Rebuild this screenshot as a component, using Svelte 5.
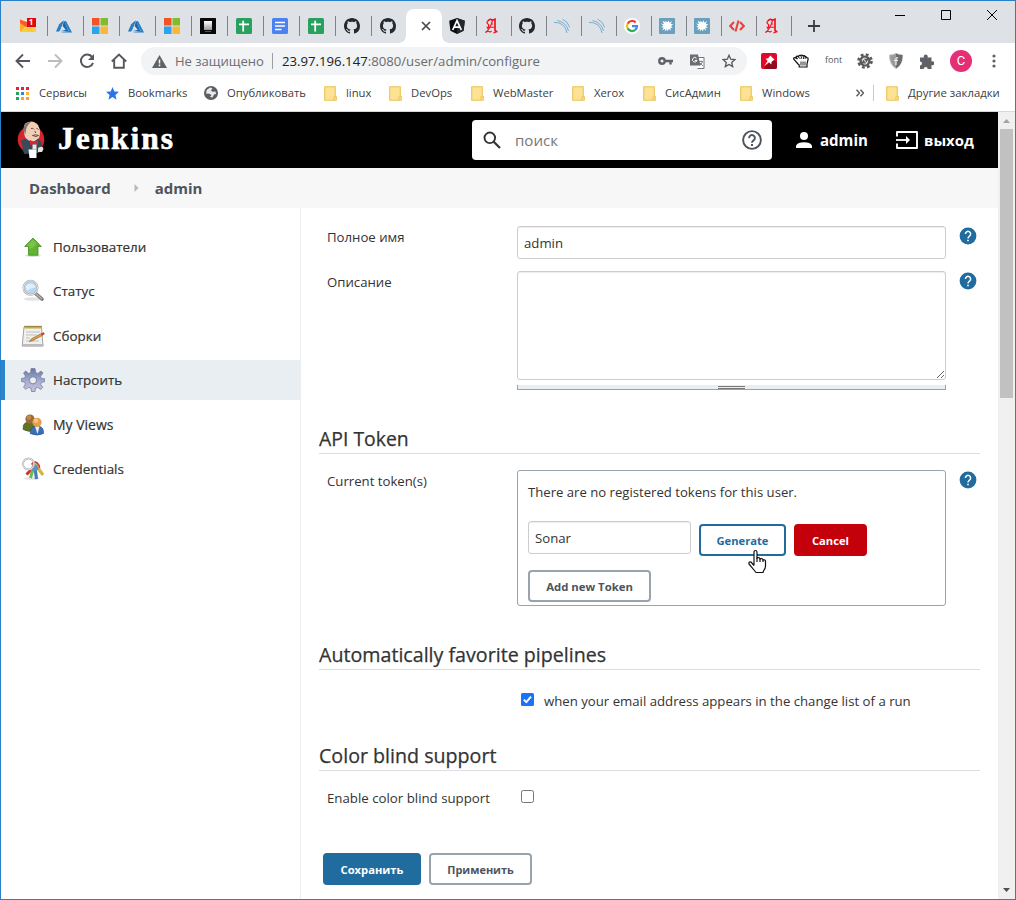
<script>
  const tabsBefore = ['mail', 'azure', 'ms', 'azure', 'ms', 'black', 'sheets', 'docs', 'sheets', 'github', 'github'];
  const tabsAfter = ['angular', 'gothic', 'github', 'swoosh', 'swoosh', 'google', 'splat', 'splat', 'code', 'gothic'];
  const folders = [
    { name: 'linux', width: 65 },
    { name: 'DevOps', width: 82 },
    { name: 'WebMaster', width: 101 },
    { name: 'Xerox', width: 71 },
    { name: 'СисАдмин', width: 97 },
    { name: 'Windows', width: 112 }
  ];
  const menu = [
    { label: 'Пользователи', icon: 'up' },
    { label: 'Статус', icon: 'search' },
    { label: 'Сборки', icon: 'notepad' },
    { label: 'Настроить', icon: 'gear', active: true },
    { label: 'My Views', icon: 'people' },
    { label: 'Credentials', icon: 'keys' }
  ];
  const gridDots = ['#ea1f3d', '#ea1f3d', '#ea1f3d', '#1fa463', '#2f83f7', '#f7b52c', '#1fa463', '#f7a52c', '#f7a52c'];
  let fullName = $state('admin');
  let tokenName = $state('Sonar');
  let description = $state('');
</script>

{#snippet favicon(kind)}
  {#if kind === 'mail'}
    <div class="mail">
      <svg width="16" height="16" viewBox="0 0 16 16">
        <path d="M0 3h16v11H0z" fill="#ffd24d" /><path d="M0 3v11l6-6z" fill="#f5ae2c" /><path d="M0 14l6-5 2 1.500L10 9l6 5z" fill="#ffca3a" /><path d="M0 2h8v7z" fill="#fff1c2" /><path d="M0 1.500V5l6 4 4-1V5z" fill="#fb5a2c" /><path d="M7 0h9v9H7z" fill="#e30613" />
      </svg>
      <b>1</b>
    </div>
  {:else}
    <svg width="16" height="16" viewBox="0 0 16 16">
      {#if kind === 'gothic'}
        <g fill="none" stroke="#f3121d"><path d="M4 2.800Q6 .5 8.500 2.200L11 1.200V12q.3 1.800 2.500 1.500" stroke-width="1.700" /><path d="M4.500 2.500Q1.500 4.500 4.500 6.500 5.500 8 3.500 11" stroke-width="1.300" /><path d="M8.500 2.500L6.500 8.500 3 13.500M2.500 9.300H11M7 5.500l2 .800" stroke-width="1.100" /><path d="M1.500 14.800q1-2.300 3-1.300 2 1 3-.5M9.500 14.800l2.500-1" stroke-width="1.300" /></g>
      {:else if kind === 'azure'}
        <path d="M7.500 2.600L3.300 6.300 0 13.500h3.200z" fill="#1b75bb" /><path d="M8.200 3.200l4.600 9.900-8.200 1.300H16L10 3z" fill="#1f80cc" /><path d="M8 2.500L6.600 8l3.200 3.800-5.300 1.400h8z" fill="#1769ae" /><path d="M8 2.500l-4 10H1.500L4 6z" fill="#2b80c5" />
      {:else if kind === 'ms'}
        <path d="M0 0h7.500v7.500H0z" fill="#f35325" /><path d="M8.500 0H16v7.500H8.500z" fill="#81bc2f" /><path d="M0 8.500h7.500V16H0z" fill="#2ba4ec" /><path d="M8.500 8.500H16V16H8.500z" fill="#fdb62f" />
      {:else if kind === 'black'}
        <defs><linearGradient id="plate" x2="0" y2="1"><stop stop-color="#fff" /><stop offset="1" stop-color="#999" /></linearGradient></defs>
        <rect width="16" height="16" rx=".5" fill="#080808" /><rect x="4" y="3" width="8" height="9" fill="url(#plate)" /><path d="M5 13.500h6" stroke="#888" stroke-width=".6" />
      {:else if kind === 'sheets'}
        <rect width="16" height="16" rx="1.500" fill="#27a15d" /><path d="M7.200 2.800v10.700M3 6.300h10" stroke="#fff" stroke-width="1.800" />
      {:else if kind === 'docs'}
        <rect width="16" height="16" rx="1.500" fill="#4b82f0" /><path d="M3 4.400h10M3 8h10M3 11.600h6.500" stroke="#fff" stroke-width="1.500" />
      {:else if kind === 'github'}
        <path fill="#24292e" d="M8 0C3.58 0 0 3.58 0 8c0 3.54 2.29 6.53 5.47 7.59.4.07.55-.17.55-.38 0-.19-.01-.82-.01-1.49-2.01.37-2.53-.49-2.69-.94-.09-.23-.48-.94-.82-1.13-.28-.15-.68-.52-.01-.53.63-.01 1.08.58 1.23.82.72 1.21 1.87.87 2.33.66.07-.52.28-.87.51-1.07-1.78-.2-3.64-.89-3.64-3.95 0-.87.31-1.59.82-2.15-.08-.2-.36-1.02.08-2.12 0 0 .67-.21 2.2.82.64-.18 1.32-.27 2-.27s1.36.09 2 .27c1.53-1.04 2.2-.82 2.2-.82.44 1.1.16 1.92.08 2.12.51.56.82 1.27.82 2.15 0 3.07-1.87 3.75-3.65 3.95.29.25.54.73.54 1.48 0 1.07-.01 1.93-.01 2.2 0 .21.15.46.55.38A8.01 8.01 0 0 0 16 8c0-4.42-3.58-8-8-8z" />
      {:else if kind === 'angular'}
        <path d="M8 0l7.800 2.800-1.200 10L8 16l-6.600-3.200L.2 2.800z" fill="#0b0d10" /><path d="M8 0l7.800 2.800-1.200 10L8 16z" fill="#25282c" /><path d="M3.700 12L8 2.600 12.300 12M5.500 9.200h5" stroke="#fff" stroke-width="1.700" fill="none" />
      {:else if kind === 'swoosh'}
        <path d="M0 4.400Q11 4 13 15M3.500 2.500Q12.500 4.600 14.500 13M8.500 1.200Q14 3.500 15.800 9.500" fill="none" stroke="#69a9d1" stroke-width=".9" />
      {:else if kind === 'google'}
        <circle cx="8" cy="8" r="8" fill="#fff" /><g fill="none" stroke-width="2.200"><path d="M3.600 5.700A5 5 0 0 1 11.700 4.500" stroke="#ea4335" /><path d="M3.600 5.700a5 5 0 0 0 0 4.600" stroke="#fbbc05" /><path d="M3.600 10.300a5 5 0 0 0 7.600 1.600" stroke="#34a853" /><path d="M11.200 11.900A5 5 0 0 0 13 8.200H8" stroke="#4285f4" /></g>
      {:else if kind === 'splat'}
        <rect width="16" height="16" rx="1" fill="#68a0bd" /><path d="M7 4.500L5.800 2.500l2.500 1.800L9.800 2.200l.5 2.500L13 3l-1.300 2.800 2.600.7L12 8l1.700 2-2.500-.3 1 3-2.500-2L9 13.500 7.800 11.200 5.800 13.500 6 10.800 3 12.300 4.700 9.500 2 9l2.500-1.300L2 5.500l3 .5L3.500 2.800z" fill="#fff" />
      {:else if kind === 'code'}
        <path d="M5 4L1.200 8 5 12M11 4l3.800 4L11 12M9.500 2.500l-3 11" fill="none" stroke="#e8413b" stroke-width="2" />
      {/if}
    </svg>
  {/if}
{/snippet}

{#snippet folder()}
  <svg class="folder" width="13" height="15" viewBox="0 0 13 15"><path d="M.7.7h10.600v9.500l1 .6v3.500H.7z" fill="#fde293" stroke="#ecc45c" stroke-width="1.100" /><path d="M9.900 14v-3.200h2.400" fill="none" stroke="#ecc45c" /></svg>
{/snippet}

{#snippet help()}
  <svg class="help" width="18" height="18" viewBox="0 0 18 18"><circle cx="9" cy="9" r="8.400" fill="#216c9f" /><path d="M6.400 7a2.600 2.600 0 1 1 4.200 2C9.600 9.700 9 10.100 9 11.400" fill="none" stroke="#fff" stroke-width="1.500" /><path d="M8.200 12.700h1.600v1.600H8.200z" fill="#fff" /></svg>
{/snippet}

<div class="window">
  <div class="tabstrip">
    {#each tabsBefore as t, i}
      <div class="tab" class:sep={i < 10}>{@render favicon(t)}</div>
    {/each}
    <div class="tab current"><svg width="10" height="10" viewBox="0 0 10 10"><path d="M1 1l8 8M9 1L1 9" stroke="#45484c" stroke-width="1.700" /></svg></div>
    {#each tabsAfter as t}
      <div class="tab after sep">{@render favicon(t)}</div>
    {/each}
    <svg class="plus" width="12" height="12" viewBox="0 0 12 12"><path d="M6 0v12M0 6h12" stroke="#3a3d41" stroke-width="1.800" /></svg>
    <div class="controls">
      <svg width="10" height="10"><path d="M0 5.500h10" stroke="#000" /></svg>
      <svg width="10" height="10"><path d="M.5.500h9v9h-9z" fill="none" stroke="#000" /></svg>
      <svg width="10" height="10"><path d="M0 0l10 10M10 0L0 10" stroke="#000" /></svg>
    </div>
  </div>

  <div class="toolbar">
    <svg width="16" height="16" viewBox="0 0 16 16"><path d="M15 8H2M8 1.500L1.500 8 8 14.500" fill="none" stroke="#55585c" stroke-width="1.900" /></svg>
    <svg width="16" height="16" viewBox="0 0 16 16"><path d="M1 8h13M8 1.500L14.500 8 8 14.500" fill="none" stroke="#babcbe" stroke-width="1.900" /></svg>
    <svg width="16" height="16" viewBox="0 0 16 16"><path d="M13.200 4.200A6.200 6.200 0 1 0 14 9.800" fill="none" stroke="#55585c" stroke-width="2" /><path d="M15 1v6H9z" fill="#55585c" /></svg>
    <svg width="16" height="16" viewBox="0 0 16 16"><path d="M3.200 7v7.800h9.600V7M.8 8.500L8 1.500l7.200 7" fill="none" stroke="#55585c" stroke-width="1.900" /></svg>
    <div class="address">
      <svg width="15" height="13" viewBox="0 0 15 13"><path d="M7.500 0L15 13H0z" fill="#5f6368" /><path d="M7.500 4.500v4M7.500 9.500v1.700" stroke="#fff" stroke-width="1.500" /></svg>
      <span class="insecure">Не защищено</span><span class="bar"></span>
      <span class="url"><b>23.97.196.147</b>:8080/user/admin/configure</span>
      <svg width="15" height="8" viewBox="0 0 15 8"><circle cx="4" cy="4" r="2.700" fill="none" stroke="#5f6368" stroke-width="2.400" /><path d="M7 4h8M12.500 4v3.500" stroke="#5f6368" stroke-width="2.400" /></svg>
      <svg width="15" height="15" viewBox="0 0 15 15"><path d="M5 3.500h9v11H7.500" fill="#fff" stroke="#74777b" /><path d="M0 .5h8l2.500 11H0z" fill="#696c70" /><path d="M6.500 4.200A2.300 2.300 0 1 0 7 6.400H4.800" fill="none" stroke="#fff" /><path d="M9 7.500h4M11 6.500v1M12.400 7.500Q12 10 9.500 11.200M10 9l3 3" stroke="#777" fill="none" stroke-width=".9" /></svg>
      <svg width="14" height="14" viewBox="0 0 14 14"><path d="M7 1.300l1.700 3.900 4.200.4-3.200 2.800 1 4.200L7 10.400l-3.700 2.200 1-4.200L1.100 5.600l4.200-.4z" fill="none" stroke="#55585c" stroke-width="1.300" /></svg>
    </div>
    <div class="extensions">
      <svg width="16" height="16" viewBox="0 0 16 16"><rect width="16" height="16" rx="2" fill="#e1092a" /><path d="M3 14L13 7l3 3v4q0 2-2 2H5z" fill="#8e0a20" /><path d="M9.300 2.500l4.200 4.200-1.300.7-1.600 1.300-.3 2.800L8 9.300 3.300 13 6.600 8 4.500 5.700l2.800-.4z" fill="#fff" /></svg>
      <svg width="16" height="14" viewBox="0 0 16 14"><path d="M5 10L1 5.500Q0 3.500 2 3.500L4.500 5 3 3Q4 1.500 5.500 2.800 6 1 7.500 1.500 8.500.500 10 1.700q1.500-.5 1.900.8 1.500-.2 1.600 1.100 1.600-.1 1.700 1.200L14 10v3H6.200V11z" fill="#fff" stroke="#111" stroke-width="1.200" /><path d="M5.500 3l2 2M8 1.800l.7 3M10.300 2l.2 3M12.300 3l-.2 2M8 7.500v4M10 7.500v4M12 7.500v4" stroke="#111" stroke-width=".9" /></svg>
      <span class="font">font</span>
      <svg width="16" height="16" viewBox="0 0 16 16"><circle cx="8" cy="8" r="6.500" fill="none" stroke="#5a5a5a" stroke-width="2.600" stroke-dasharray="2.800 2.305" /><circle cx="8" cy="8" r="5.600" fill="#5a5a5a" /><path d="M5.500 8.500a2.500 2.500 0 0 1 4-2.800M10.500 7.500a2.500 2.500 0 0 1-4 2.800M6.500 6l3 4" fill="none" stroke="#ddd" stroke-width="1.100" /></svg>
      <svg width="14" height="16" viewBox="0 0 14 16"><path d="M7 .5Q10 2 13.500 2 13.500 12 7 15.500.5 12 .5 2 4 2 7 .5z" fill="#9a9a9a" stroke="#c3c3c3" /><path d="M7 .5Q10 2 13.500 2 13.500 12 7 15.500z" fill="#6c6c6c" /><path d="M9 5q-2-1-2 1v6M5 7.300h4" fill="none" stroke="#eee" stroke-width="1.300" /></svg>
      <svg width="15" height="15" viewBox="0 0 15 15"><path d="M1 3.500h4a2 2 0 1 1 3.500 0h4v4a2 2 0 1 1 0 3.500v4H8.700a2 2 0 1 0-4 0H1v-3.600a2 2 0 0 0 0-4z" fill="#5f6368" /></svg>
      <span class="avatar">C</span>
      <svg class="kebab" width="4" height="14" viewBox="0 0 4 14"><g fill="#5f6368"><circle cx="2" cy="2" r="1.600" /><circle cx="2" cy="7" r="1.600" /><circle cx="2" cy="12" r="1.600" /></g></svg>
    </div>
  </div>

  <div class="bookmarks">
    <div class="bm services">
      <svg width="13" height="13" viewBox="0 0 13 13">{#each gridDots as c, i}<rect x={(i % 3) * 5} y={Math.floor(i / 3) * 5} width="3" height="3" fill={c} />{/each}</svg>
      <span>Сервисы</span>
    </div>
    <div class="bm starred">
      <svg width="13" height="13" viewBox="0 0 13 13"><path d="M6.500 0l1.800 4.500 4.700.3-3.600 3.100 1.100 4.800-4-2.600-4 2.600 1.100-4.800L0 4.800l4.700-.3z" fill="#2a73e8" /></svg>
      <span>Bookmarks</span>
    </div>
    <div class="bm publish">
      <svg width="14" height="14" viewBox="0 0 14 14"><circle cx="7" cy="7" r="7" fill="#5b5e62" /><path d="M6 1.500l2.500.8L7 4.500l1.300 1.300 3.200-.3.500 2.500-2 .500-1.500 3L6 11l1.500-2L5.500 7.800 2 7.500 2.700 4z" fill="#e9eaeb" /></svg>
      <span>Опубликовать</span>
    </div>
    {#each folders as f}
      <div class="bm" style:width="{f.width}px">{@render folder()}<span>{f.name}</span></div>
    {/each}
    <svg class="chev" width="8" height="8" viewBox="0 0 8 8"><path d="M.5.800L3.500 4 .5 7.200M4.500.800L7.500 4 4.500 7.200" fill="none" stroke="#55585c" stroke-width="1.400" /></svg>
    <span class="bar"></span>
    <div class="bm other">{@render folder()}<span>Другие закладки</span></div>
  </div>

  <div class="viewport">
    <div class="page">
      <header>
        <svg class="butler" width="28" height="38" viewBox="0 0 28 38">
          <circle cx="14" cy="18.500" r="13.300" fill="#d2252f" />
          <path d="M3.500 20q4-2 7-3l11 1q4 3 4 11l-4 3-14 1-2-4q1-4-2-9z" fill="#354c5b" />
          <path d="M8 16Q5 5 9 2q7-4 12 2 3.500 6 1 13l-5 3.500q-6 0-9-4.500z" fill="#efcfb5" />
          <path d="M8 13Q5 6 9 2.500q3-2 5-1.500-5 3-5.500 12" fill="#82736a" />
          <path d="M14 7.500q2-1 3 1M19.500 7.500q1.500 0 2 1M18 10l.5 2M15.500 14.500q3-1.500 6 0-2 2-6 0" fill="none" stroke="#584039" stroke-width=".9" />
          <path d="M13 19l4 2 4-2v5l-4-1-4 1z" fill="#d42532" /><path d="M15.500 23.500h4v5h-4z" fill="#efe4df" />
          <path d="M11.500 28.500h8v8.500h-7z" fill="#fff" /><path d="M21 27q5-3 5.500 1l-1.500 3h-4z" fill="#efe0d5" />
        </svg>
        <span class="logo">Jenkins</span>
        <div class="search">
          <svg width="19" height="19" viewBox="0 0 19 19"><circle cx="6.800" cy="6.800" r="5.300" fill="none" stroke="#333" stroke-width="1.900" /><path d="M10.500 10.500l6.500 6.500" stroke="#333" stroke-width="2.200" /></svg>
          <span>поиск</span>
          <svg width="20" height="20" viewBox="0 0 20 20"><circle cx="10" cy="10" r="8.900" fill="none" stroke="#4d545d" stroke-width="1.900" /><path d="M7.100 8.100a2.900 2.900 0 1 1 4.600 2.200c-1.100.8-1.700 1.200-1.700 2.500" fill="none" stroke="#4d545d" stroke-width="1.900" /><path d="M9 14h2v2H9z" fill="#4d545d" /></svg>
        </div>
        <div class="user">
          <svg width="16" height="16" viewBox="0 0 16 16"><circle cx="8" cy="4" r="4" fill="#fff" /><path d="M0 16v-2.500Q2 10.200 8 10.200t8 3.300V16z" fill="#fff" /></svg><span>admin</span>
        </div>
        <div class="logout">
          <svg width="22" height="18" viewBox="0 0 22 18"><path d="M1 5.500V1h20v16H1v-4.500" fill="none" stroke="#fff" stroke-width="1.900" stroke-linejoin="round" /><path d="M0 9h11" stroke="#fff" stroke-width="1.800" /><path d="M10 5l4 4-4 4z" fill="#fff" /></svg><span>выход</span>
        </div>
      </header>
      <div class="crumbs">
        <span>Dashboard</span><svg width="5" height="8" viewBox="0 0 5 8"><path d="M.5 0L4.500 4l-4 4z" fill="#b9b9b9" /></svg><span>admin</span>
      </div>
      <div class="body">
        <nav>
          {#each menu as m}
            <div class="item" class:active={m.active}>
              <svg width="24" height="24" viewBox="0 0 24 24">
                {#if m.icon === 'up'}
                  <ellipse cx="12" cy="20.500" rx="8" ry="1.500" fill="#ddd" /><path d="M12 3l8.300 8.500H17v8.700H7.500v-8.700H3.700z" fill="#63b332" stroke="#3f8f1d" stroke-width=".8" /><path d="M12 4.500l-6.500 6.500h3v3q4-1 7-5.500z" fill="#85cb57" opacity=".7" />
                {:else if m.icon === 'search'}
                  <ellipse cx="12" cy="20" rx="9" ry="1.700" fill="#e2e2e2" /><path d="M14 14l7 6" stroke="#777" stroke-width="3.600" stroke-linecap="round" /><path d="M14 14l7 6" stroke="#b5b5b5" stroke-width="1.600" /><circle cx="9.500" cy="8.800" r="7" fill="#b9d6f4" stroke="#aaa" stroke-width="2" /><circle cx="9.500" cy="8.800" r="7" fill="none" stroke="#eee" stroke-width=".9" /><path d="M4.500 8.500a5.200 5.200 0 0 1 10 0q-5 0-8 3.500z" fill="#e1effd" />
                {:else if m.icon === 'notepad'}
                  <path d="M3 3h17.500l1.500 19H1.200z" fill="#f0f0ee" stroke="#999" stroke-width=".9" /><path d="M1.500 20h21v2.300h-21z" fill="#bbb" /><path d="M3.500 2h17v2.500h-17z" fill="#c6ad4b" /><path d="M3.500 2.300h17" stroke="#75662b" stroke-width="1.300" stroke-dasharray="1 1" /><path d="M5 8h14M5 11h11M5 14h4M5 17h13" stroke="#c1c1c1" /><path d="M8.500 17.500l2-2.700L20.500 9.500l1 1.800-10 5.400z" fill="#e5a03b" stroke="#80561d" stroke-width=".6" /><path d="M20 9.500l2.500-1.200q1.500.5 1 2l-2.200 1.200z" fill="#d93832" />
                {:else if m.icon === 'gear'}
                  <defs><linearGradient id="steel" x2="0" y2="1"><stop stop-color="#6478a2" /><stop offset=".6" stop-color="#abb1d3" /><stop offset="1" stop-color="#cbbedb" /></linearGradient></defs>
                  <path d="M10 .5h4l.6 4 2.300 1 3.100-2.500 2 2L19.500 8.300l1 2.200 3.200.3v3l-3.200.5-1 2 2.300 3-2 2.200-3-2.200-2.300 1-.5 3.200h-3.500L10 20.300l-2.300-1-3 2-2.200-2L4.500 16l-1-2-3.200-.5v-3l3.200-.5 1-2L2.500 5l2.200-2 3 2.500 2-1z" fill="url(#steel)" stroke="#7a7ca5" stroke-width=".8" /><circle cx="12" cy="12.300" r="3.600" fill="#e9eff1" stroke="#7a83ad" />
                {:else if m.icon === 'people'}
                  <path d="M2.200 16.500Q1.500 9 8 9q6 0 5.500 8.500-6 2-11.300-1z" fill="#5f7422" stroke="#46561b" stroke-width=".8" /><circle cx="9" cy="6" r="4.600" fill="#9e6935" /><circle cx="8" cy="4.500" r="2.300" fill="#c18a51" /><path d="M9.200 20.500Q9 13 16 13t6.500 7.500q-6.500 3-13.300 0z" fill="#3c70b5" stroke="#24508d" stroke-width=".7" /><path d="M14 13.500h4.500L16.500 21z" fill="#e9eef6" /><circle cx="16" cy="9.300" r="4.600" fill="#e89e48" /><circle cx="15" cy="7.800" r="2.300" fill="#f7c27d" />
                {:else}
                  <ellipse cx="11" cy="21.500" rx="8" ry="1.300" fill="#e2e2e2" /><path d="M17 11l5 7" stroke="#d7b53d" stroke-width="3.200" /><path d="M10 13l-4.500 4.500" stroke="#d52e32" stroke-width="3" /><path d="M12 12l-2.500 9" stroke="#68bf48" stroke-width="3" /><path d="M14 11l1.500 11" stroke="#467bb9" stroke-width="3.200" /><path d="M10.500 9.500q3-3 6-1l1 4q-3 3-6 1z" fill="#5b91c8" /><path d="M10.500 7.500q4-5 7.500 1l.5 2.500" fill="none" stroke="#d83c34" stroke-width="1.800" /><path d="M11.500 9q3-3 5.500.5" fill="none" stroke="#6db14a" stroke-width="1.500" /><circle cx="7.500" cy="7" r="5.500" fill="none" stroke="#aaa" stroke-width="1.800" /><circle cx="7.500" cy="7" r="5.500" fill="none" stroke="#f1f1f1" stroke-width=".8" />
                {/if}
              </svg>
              <span>{m.label}</span>
            </div>
          {/each}
        </nav>
        <main>
          <div class="row name">
            <span class="label">Полное имя</span><input class="text" bind:value={fullName} />{@render help()}
          </div>
          <div class="row descr">
            <span class="label">Описание</span>
            <div>
              <textarea class="text" bind:value={description}></textarea>
              <div class="grip"><span></span></div>
            </div>
            {@render help()}
          </div>
          <h2 class="h-token">API Token</h2>
          <div class="row tokens">
            <span class="label">Current token(s)</span>
            <div class="panel">
              <p>There are no registered tokens for this user.</p>
              <div class="new">
                <input class="text" bind:value={tokenName} />
                <button class="btn generate">Generate
                  <svg class="pointer" width="20" height="26" viewBox="0 0 20 26"><path d="M7 16.500V3.300Q7 1.500 8.500 1.500T10 3.300V9q3-1 3 1 3-1 3 1 2.500-.8 2.500 1.500V17q0 2.500-2 5l-.5 1.500h-7L7 21l-5-6q-.5-2.500 2-2l3 3.500" fill="#fff" stroke="#111" stroke-width="1.200" stroke-linejoin="round" /><path d="M10 8.500V13M13 9.500V13M16 10.500V13" stroke="#111" stroke-width="1.200" /></svg>
                </button>
                <button class="btn cancel">Cancel</button>
              </div>
              <button class="btn add">Add new Token</button>
            </div>
            {@render help()}
          </div>
          <h2 class="h-fav">Automatically favorite pipelines</h2>
          <div class="row fav">
            <label><svg width="13" height="13" viewBox="0 0 13 13"><rect width="13" height="13" rx="1.500" fill="#1a73f8" /><path d="M2.800 6.700l2.500 2.500L10 3.600" fill="none" stroke="#fff" stroke-width="1.900" /></svg><span>when your email address appears in the change list of a run</span></label>
          </div>
          <h2 class="h-color">Color blind support</h2>
          <div class="row color">
            <span class="label">Enable color blind support</span>
            <label><svg width="13" height="13" viewBox="0 0 13 13"><rect x=".5" y=".5" width="12" height="12" rx="1.800" fill="#fff" stroke="#767676" /></svg></label>
          </div>
          <div class="actions">
            <button class="btn save">Сохранить</button><button class="btn apply">Применить</button>
          </div>
        </main>
      </div>
    </div>
    <div class="scroll">
      <svg width="17" height="17" viewBox="0 0 17 17"><path d="M5 11h7L8.500 7z" fill="#a3a3a3" /></svg>
      <div class="thumb"></div>
      <svg width="17" height="17" viewBox="0 0 17 17"><path d="M5 6h7l-3.500 4z" fill="#505050" /></svg>
    </div>
  </div>
</div>

<style>
  :global(body) { overflow: hidden; }
  * { box-sizing: border-box; }
  svg { display: block; flex: none; }
  .window { width: 1016px; height: 900px; border: 1px solid #2a80c8; background: #fff; display: flex; flex-direction: column; font: 13.200px/20px 'Open Sans', 'Noto Sans', sans-serif; color: #333; }

  .tabstrip { height: 42px; background: #dee1e6; display: flex; align-items: flex-end; padding-left: 9px; flex: none; }
  .tab { width: 36px; height: 34px; display: flex; align-items: center; justify-content: center; position: relative; padding-right: 1px; }
  .tab.after { width: 35px; padding-right: 6px; }
  .tab.sep::after { content: ''; position: absolute; right: -2px; top: 7px; width: 1px; height: 20px; background: #808387; }
  .tab.after.sep::after { right: 0; }
  .tab.current { background: #fff; border-radius: 8px 8px 0 0; padding: 0 0 0 4px; z-index: 1; }
  .current::before, .current::after { content: ''; position: absolute; bottom: 0; width: 7px; height: 7px; }
  .current::before { left: -7px; background: radial-gradient(circle at 0 0, transparent 6.500px, #fff 7px); }
  .current::after { right: -7px; background: radial-gradient(circle at 100% 0, transparent 6.500px, #fff 7px); }
  .mail { position: relative; width: 16px; height: 16px; }
  .mail b { position: absolute; left: 7px; top: -1px; width: 9px; height: 10px; font: 700 8px/10px 'Open Sans', sans-serif; color: #fff; text-align: center; }
  .plus { margin: 0 auto 11px 16px; }
  .controls { display: flex; gap: 36px; align-self: flex-start; padding: 9px 18px 0 0; }

  .toolbar { height: 36px; flex: none; display: flex; align-items: center; padding-left: 14px; }
  .toolbar > svg { margin-right: 16px; }
  .address { width: 606px; height: 28px; border-radius: 14px; background: #f1f3f4; display: flex; align-items: center; padding: 0 11px; margin-left: -2px; }
  .insecure { margin-left: 8px; width: 90px; color: #6b6e72; white-space: nowrap; font-size: 13.040px; }
  .address .bar { width: 1px; height: 16px; background: #9b9ea2; margin: 0 9px 0 7px; }
  .url { color: #696c70; white-space: nowrap; flex: 1; font-size: 13.180px; }
  .url b { font-weight: 400; color: #202124; }
  .address svg + svg { margin-left: 17px; }
  .extensions { display: flex; align-items: center; flex: 1; padding-left: 14px; }
  .extensions > svg { margin-right: 16px; }
  .font { font-size: 9px; width: 17px; margin-right: 15px; color: #555; position: relative; top: -1px; }
  .avatar { width: 22px; height: 22px; border-radius: 50%; background: #e62e77; color: #fff; font: 13px/22px Roboto, sans-serif; text-align: center; margin-right: 20px; }
  .extensions > .kebab { margin: 0; }

  .bookmarks { height: 33px; flex: none; border-bottom: 1px solid #d6d8da; display: flex; align-items: center; padding: 0 0 4px 15px; font-size: 11.270px; color: #3c4043; }
  .bm { display: flex; align-items: center; flex: none; white-space: nowrap; }
  .bm span { margin-left: 9px; }
  .services { width: 90px; }
  .services span { margin-left: 10px; }
  .starred { width: 98px; }
  .publish { width: 120px; }
  .chev { margin-left: 4px; }
  .bookmarks .bar { width: 1px; height: 16px; background: #c8cacd; margin: 0 12px 0 9px; }
  .bookmarks .other { font-size: 11.350px; }

  .viewport { flex: 1; display: flex; min-height: 0; }
  .page { width: 997px; display: flex; flex-direction: column; }
  header { height: 56px; background: #000; display: flex; align-items: center; color: #fff; font-weight: 700; font-size: 15.050px; }
  .butler { margin-left: 16px; }
  .logo { font: 700 31.500px/40px 'Liberation Serif', serif; -webkit-text-stroke: .6px #fff; letter-spacing: 1.950px; margin-left: 13px; width: 414px; margin-top: -2px; }
  .search { width: 300px; height: 40px; border-radius: 4px; background: #fff; display: flex; align-items: center; padding: 0 10px 0 11px; color: #777; font-weight: 400; }
  .search span { flex: 1; margin-left: 13px; }
  .user, .logout { display: flex; align-items: center; }
  .user { margin-left: 24px; width: 100px; }
  .user span { margin-left: 8px; }
  .logout span { margin-left: 6px; font-size: 14.950px; }
  .crumbs { height: 40px; background: #f7f7f7; display: flex; align-items: center; padding-left: 28px; font-weight: 700; font-size: 15px; color: #4d545d; }
  .crumbs svg { margin: 0 16px 0 23px; }
  .body { flex: 1; display: flex; }
  nav { width: 300px; border-right: 1px solid #e8eef1; padding-top: 19px; display: flex; flex-direction: column; gap: 4.450px; }
  .item { height: 40px; display: flex; align-items: center; padding-left: 20px; font-size: 13.430px; -webkit-text-stroke: .2px #333; }
  .item span { margin-left: 8px; }
  .item:nth-child(5) { font-size: 14px; }
  .item.active { background: #e8eef1; border-left: 4px solid #2886cf; padding-left: 16px; }
  main { width: 697px; padding-left: 18px; }
  .row { display: grid; grid-template-columns: 190px 429px auto; padding-left: 8px; align-items: start; }
  .help { margin: 1px 0 0 13px; }
  .text { display: block; border: 1px solid #ccc; border-radius: 3px; box-shadow: inset 0 1px 1px rgba(0, 0, 0, .075); font: inherit; color: #333; padding: 0 6px; width: 100%; height: 33px; outline: 0; background: #fff; }
  .name { padding-top: 18px; height: 63px; }
  .name .label, .descr .label { margin-top: 1px; }
  textarea.text { height: 109px; resize: vertical; }
  .grip { height: 5px; margin-top: 5px; background: #e8eef1; border: 1px solid #98a3ad; border-top: 0; display: flex; justify-content: center; }
  .grip span { width: 27px; height: 3px; margin-top: 1px; border: 1px solid #777; border-width: 1px 0; }
  h2 { margin: 0; width: 661px; border-bottom: 1px solid #dcdfe1; font-weight: 400; font-size: 19.650px; line-height: 28px; display: flex; align-items: flex-end; -webkit-text-stroke: .25px #333; }
  .h-token { height: 64px; font-size: 19.400px; }
  .tokens { padding-top: 16px; height: 152px; }
  .tokens .label { margin-top: 1px; }
  .panel { height: 136px; border: 1px solid #98a3ad; border-radius: 3px; padding: 11px 10px 0; }
  p { margin: 0; font-size: 13.130px; }
  .new { display: flex; align-items: flex-start; margin-top: 19px; height: 49px; }
  .new .text { width: 163px; margin-right: 8px; }
  .btn { height: 32px; border: 2px solid #98a3ad; border-radius: 4px; background: #fff; color: #4d545d; font: 700 11.200px/28px 'Open Sans', sans-serif; padding: 1px 0 0; display: block; white-space: nowrap; }
  .new .btn { margin-top: 3px; }
  .generate { width: 87px; color: #216c9f; border-color: #216c9f; position: relative; }
  .pointer { position: absolute; left: 46px; top: 23px; }
  .cancel { width: 73px; background: #c4000a; border-color: #c4000a; color: #fff; margin-left: 8px; }
  .add { width: 123px; font-size: 11.350px; }
  .h-fav { height: 64px; }
  .fav { padding: 23px 0 0 202px; display: block; height: 54px; }
  label { display: flex; }
  .fav label span { margin: -2px 0 0 10px; }
  .h-color { height: 47px; }
  .color { padding-top: 19px; height: 82px; }
  .color .label { margin-top: -2px; font-size: 13.260px; }
  .color label { padding-left: 4px; }
  .actions { display: flex; gap: 8px; padding-left: 4px; }
  .save { width: 98px; background: #216c9f; border-color: #216c9f; color: #fff; }
  .apply { width: 103px; font-size: 10.950px; }
  .scroll { width: 17px; background: #f0f0f0; display: flex; flex-direction: column; }
  .thumb { height: 269px; width: 13px; margin: 0 0 auto 2px; background: #c1c1c1; }
</style>
